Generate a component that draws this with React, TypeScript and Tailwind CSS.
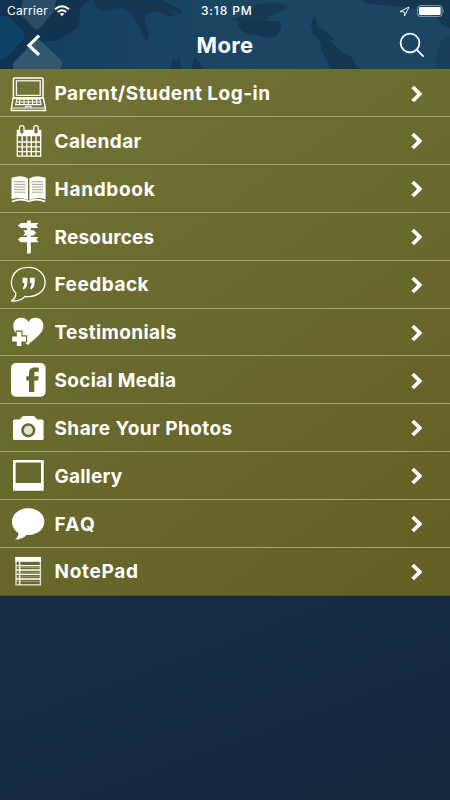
import type { ReactNode } from "react";

type MenuItem = {
    label: string;
    tracking: string;
    icon: ReactNode;
};

const OLIVE = "#6b6a2d";

const LaptopIcon = (
    <g fill="none" stroke="white" strokeWidth="1.5">
        <rect x="3.4" y="3" width="29.6" height="20" rx="1.2" />
        <rect x="6.4" y="5.8" width="23.8" height="14.6" strokeWidth="1.2" />
        <path d="M3 23 L1.4 33.5 V35.4 H35.4 V33.5 L33.4 23 Z" />
        <path d="M1.4 33 H35.4" strokeWidth="1" />
        <path d="M7 24.3 H30 L31 29.6 H5.6 Z M6.5 27 H30.5 M10 24.3 L9.5 29.6 M14 24.3 V29.6 M18.3 24.3 V29.6 M22.6 24.3 V29.6 M26.6 24.3 L27 29.6" strokeWidth="1.1" />
        <path d="M15.2 33 L15.8 31.2 H20.8 L21.4 33" strokeWidth="1.1" />
    </g>
);

const CalendarIcon = (
    <g>
        <rect x="6.7" y="6.8" width="24.6" height="6.4" fill="white" />
        <path d="M7.3 12 V33.2 H30.7 V12 M12.2 13 V33 M16.8 13 V33 M21.3 13 V33 M26 13 V33 M7 19 H31 M7 23.8 H31 M7 28.6 H31" fill="none" stroke="white" strokeWidth="1.3" />
        <rect x="9.6" y="2.6" width="4.4" height="8.6" rx="2" fill={OLIVE} stroke="white" strokeWidth="1.3" />
        <rect x="23.8" y="2.6" width="4.4" height="8.6" rx="2" fill={OLIVE} stroke="white" strokeWidth="1.3" />
    </g>
);

const BookIcon = (
    <g>
        <path d="M1.5 6.8 Q11 3.5 18 7.4 V29 Q10 25.5 1.5 28.2 Z M19.4 7.4 Q26 3.5 35.6 6.8 V28.2 Q27 25.5 19.4 29 Z" fill="white" />
        <path d="M2 30.5 Q11 26.8 18.7 30.4 Q26 26.8 35.2 30.5" fill="none" stroke="white" strokeWidth="1.5" />
        <path d="M4.2 10.8 H15.4 M4.2 13.4 H15.4 M4.2 16 H15.4 M4.2 18.6 H15.4 M4.2 21.2 H15.4 M22 10.8 H33 M22 13.4 H33 M22 16 H33 M22 18.6 H33 M22 21.2 H33" stroke={OLIVE} strokeWidth="0.6" />
    </g>
);

const SignpostIcon = (
    <g fill="white">
        <rect x="17" y="1.5" width="3.8" height="33" />
        <path d="M7.8 6.4 L11 4 H28.4 L26.2 6.4 L28.4 9 H11 Z" />
        <path d="M13.2 11.2 H23.5 L26.2 13.8 L23.5 16.4 H13.2 L15.2 13.8 Z" />
        <path d="M7.8 20.6 L11 18.1 H28.6 L26.4 20.6 L28.6 23.2 H11 Z" />
    </g>
);

const FeedbackIcon = (
    <g>
        <path d="M5.7 27 C-2.5 19.5 .6 1.4 18.3 1.4 C28 1.4 35.1 8 35.1 16.2 C35.1 26 25.5 32 15 30.4 C11.5 34.4 6 35.4 1.5 34.8 C4.4 33 6 30 5.7 27 Z" fill="none" stroke="white" strokeWidth="1.3" strokeLinejoin="round" />
        <path d="M12.6 11.8 H17.4 V16 C17.4 19.6 16.2 21.8 14 23.4 L12.6 22.3 C13.8 20.7 14.3 19 14.3 17 H12.6 Z M19.9 11.8 H24.7 V16 C24.7 19.6 23.5 21.8 21.3 23.4 L19.9 22.3 C21.1 20.7 21.6 19 21.6 17 H19.9 Z" fill="white" />
    </g>
);

const HeartIcon = (
    <g>
        <path d="M18.4 8 C16 2 3.4 1.8 3.2 12.2 C3.2 19.5 11 24 17.8 31 C25 24 33.4 19.5 33.4 12.2 C33.4 1.8 21 2 18.4 8 Z" fill="white" />
        <path d="M6.8 17.8 H11.4 V22.4 H16 V27.4 H11.4 V32 H6.8 V27.4 H2.2 V22.4 H6.8 Z" fill="white" stroke={OLIVE} strokeWidth="2.4" paintOrder="stroke" />
    </g>
);

const FacebookIcon = (
    <g>
        <rect x="1" y="1.1" width="34.6" height="33.7" rx="5" fill="white" />
        <path d="M19 30.1 V18.6 H16.3 V14.3 H19 V11.5 C19 7.2 21 5.4 25 5.4 H28.7 V9.8 H26.3 C24.8 9.8 24.3 10.4 24.3 11.8 V14.3 H28.7 L28.2 18.6 H24.3 V30.1 Z" fill={OLIVE} />
    </g>
);

const CameraIcon = (
    <g>
        <path d="M4.5 9.6 H9.6 L12.4 6.4 Q12.8 6 13.5 6 H23.4 Q24 6 24.5 6.4 L27.3 9.6 H32 Q33.6 9.6 33.6 11.2 V28.4 Q33.6 30 32 30 H4.5 Q3 30 3 28.4 V11.2 Q3 9.6 4.5 9.6 Z" fill="white" />
        <circle cx="18.3" cy="20.3" r="5.8" fill={OLIVE} fillOpacity="0.2" stroke={OLIVE} strokeWidth="2.6" />
    </g>
);

const PolaroidIcon = (
    <path d="M3 2.1 H33.7 V32.8 H3 Z M5.6 4.6 V24.9 H31 V4.6 Z" fill="white" fillRule="evenodd" />
);

const BubbleIcon = (
    <path d="M18.2 2.2 C27.2 2.2 34.4 8 34.4 15.6 C34.4 24 26 29.8 16.5 29 C13.8 32 9.5 33.6 5 33.5 C7.5 31.8 8.6 29.6 8.4 27 C4.4 24.4 2 20.6 2 15.8 C2 8 9.2 2.2 18.2 2.2 Z" fill="white" />
);

const NotepadIcon = (
    <g stroke="white" strokeWidth="1.4" fill="none">
        <rect x="6" y="4.6" width="24.4" height="27.2" stroke="#dcdcc4" />
        <rect x="5.4" y="4" width="25.6" height="4.8" fill="white" stroke="none" />
        <path d="M9.6 8 V32 M6 12.6 H30.6 M6 17 H30.6 M6 21.4 H30.6 M6 26 H30.6" />
        <path d="M6 14.6 H30.6 M6 19.2 H30.6 M6 23.8 H30.6 M6 28.4 H30.6" strokeWidth="0.8" strokeOpacity="0.45" />
    </g>
);

const items: MenuItem[] = [
    { label: "Parent/Student Log-in", tracking: "tracking-[0.48px]", icon: LaptopIcon },
    { label: "Calendar", tracking: "tracking-[0.38px]", icon: CalendarIcon },
    { label: "Handbook", tracking: "tracking-[0.7px]", icon: BookIcon },
    { label: "Resources", tracking: "tracking-[0.2px]", icon: SignpostIcon },
    { label: "Feedback", tracking: "tracking-[0.5px]", icon: FeedbackIcon },
    { label: "Testimonials", tracking: "tracking-[0.35px]", icon: HeartIcon },
    { label: "Social Media", tracking: "tracking-[0.3px]", icon: FacebookIcon },
    { label: "Share Your Photos", tracking: "tracking-[0.43px]", icon: CameraIcon },
    { label: "Gallery", tracking: "tracking-[0.22px]", icon: PolaroidIcon },
    { label: "FAQ", tracking: "tracking-[1.3px]", icon: BubbleIcon },
    { label: "NotePad", tracking: "tracking-[0.7px]", icon: NotepadIcon },
];

function HeaderArt() {
    return (
        <svg className="absolute inset-0" width="450" height="69" viewBox="0 0 450 69">
            <path d="M0 0 H90 L80 8 L79 27 Q66 36 56 41 L43 41 L62 62 V70 H0 Z" fill="#123450" />
            <path d="M0 16 Q8 15 13 21 L24 33 Q26 36 24 38 L10 54 L0 60 Z" fill="#0f4366" />
            <path d="M23 0 H56 L54 11 L40 28 Q37 31 34 28 L20 14 Z" fill="#2b4c66" />
            <path d="M35 41 Q38 38 41 41 L61 60 Q64 64 60 70 H14 Q11 64 15 61 Z" fill="#31586f" />
            <path d="M94 0 H148 L165 8 L176 15 L172 17 L158 11 L147 13 Q143 18 145 24 L149 33 L148 41 L144 38 Q137 22 133 15 Q124 6 113 9 Q103 14 96 7 Z" fill="#153753" />
            <path d="M148 0 H162 L181 10 L181 14 L170 10 L174 16 L168 16 L155 9 Z" fill="#153753" />
            <path d="M170 70 Q171 62 174 58 Q175 62 178 61 L179 55 L181 70 Z M191 70 Q192 62 196 57 Q196 63 200 62 L203 70 Z" fill="#153753" />
            <path d="M258 4 L273 2 L286 5 Q290 9 280 12 L266 17 Q274 20 262 21 H228 L242 16 Z" fill="#153a56" />
            <path d="M239 21 H280 Q283 26 278 34 Q272 40 262 36 L246 33 Q236 29 239 21 Z" fill="#143752" />
            <path d="M311 24 L314 16 Q318 22 317 26 L325 31 L336 41 L329 39 L343 53 Q353 55 356 66 L363 70 H332 Q322 55 320 41 L313 34 Z" fill="#143752" />
            <path d="M363 0 H450 V28 Q443 28 439 20 L430 12 Q400 5 378 5 Q368 4 363 2 Z" fill="#143752" />
            <path d="M436 70 Q434 55 440 44 Q444 38 450 36 V70 Z" fill="#173f5b" />
        </svg>
    );
}

function StatusBar() {
    return (
        <div className="relative flex h-[22px] items-center pl-[7px] pr-[5px] text-[12px] leading-none">
            <div className="flex w-[194px] items-center gap-[6px]">
                <span className="tracking-[0.25px]">Carrier</span>
                <svg width="16" height="12" viewBox="0 0 16 12" fill="none" stroke="white" strokeWidth="1.9">
                    <path d="M1 4.3 Q8 -1.7 15 4.3 M3.7 7 Q8 3.3 12.3 7" />
                    <path d="M5.8 8.8 Q8 7.2 10.2 8.8 L8 11.2 Z" fill="white" stroke="none" />
                </svg>
            </div>
            <span className="font-medium tracking-[0.85px]">3:18 PM</span>
            <div className="flex grow items-center justify-end gap-[7px]">
                <svg width="11" height="11" viewBox="0 0 11 11" fill="none" stroke="white" strokeWidth="0.9">
                    <path d="M1 5.6 L10 1 L5.6 10 L5.2 5.9 Z" />
                </svg>
                <svg width="28" height="12" viewBox="0 0 28 12">
                    <rect x="0.6" y="0.6" width="24.4" height="10.8" rx="2.6" fill="none" stroke="#8ba2b3" />
                    <rect x="2" y="2" width="21.6" height="8" rx="1.2" fill="white" />
                    <path d="M26.2 4 Q27.6 6 26.2 8 Z" fill="#8ba2b3" />
                </svg>
            </div>
        </div>
    );
}

function MenuRow({ item, last }: { item: MenuItem; last: boolean }) {
    return (
        <li className={`flex h-[47.85px] items-center border-b pl-[10px] pr-[27px] ${last ? "border-[#4b5230]" : "border-[#a1a077]"}`}>
            <svg className="mt-[0.6px] shrink-0 overflow-visible" width="36" height="36" viewBox="0 0 36 36">
                {item.icon}
            </svg>
            <span className={`ml-[8.5px] grow whitespace-nowrap pt-[2.6px] text-[19px] font-bold leading-6 ${item.tracking}`}>
                {item.label}
            </span>
            <svg className="mt-[1.6px]" width="12" height="18" viewBox="0 0 12 18" fill="none" stroke="white" strokeWidth="3.8">
                <path d="M1.7 2 L8.8 9 L1.7 16" />
            </svg>
        </li>
    );
}

export default function App() {
    return (
        <div className="flex h-[800px] w-[450px] flex-col overflow-hidden bg-[linear-gradient(160deg,#1b314a_40%,#162a41_75%,#13263a_100%)] font-[Inter,sans-serif] text-white">
            <header className="relative h-[69.3px] shrink-0 bg-[linear-gradient(90deg,#133f60,#1a4563_50%)]">
                <HeaderArt />
                <StatusBar />
                <div className="relative flex h-[46px] items-center pl-[26px] pr-[25px]">
                    <svg width="16" height="22" viewBox="0 0 16 22" fill="none" stroke="white" strokeWidth="3.2">
                        <path d="M13 1.6 L3 11.4 L13 21" />
                    </svg>
                    <h1 className="ml-[154.5px] grow text-[22px] font-bold leading-none tracking-[0.4px]">More</h1>
                    <svg width="26" height="26" viewBox="0 0 26 26" fill="none" stroke="white" strokeWidth="1.8">
                        <circle cx="11" cy="11" r="9.4" />
                        <path d="M17.8 17.8 L24.6 24.6" />
                    </svg>
                </div>
            </header>
            <ul className="bg-[linear-gradient(145deg,#737336_0%,#6a692d_50%,#625f24_100%)]">
                {items.map((item, i) => (
                    <MenuRow key={item.label} item={item} last={i === items.length - 1} />
                ))}
            </ul>
        </div>
    );
}
